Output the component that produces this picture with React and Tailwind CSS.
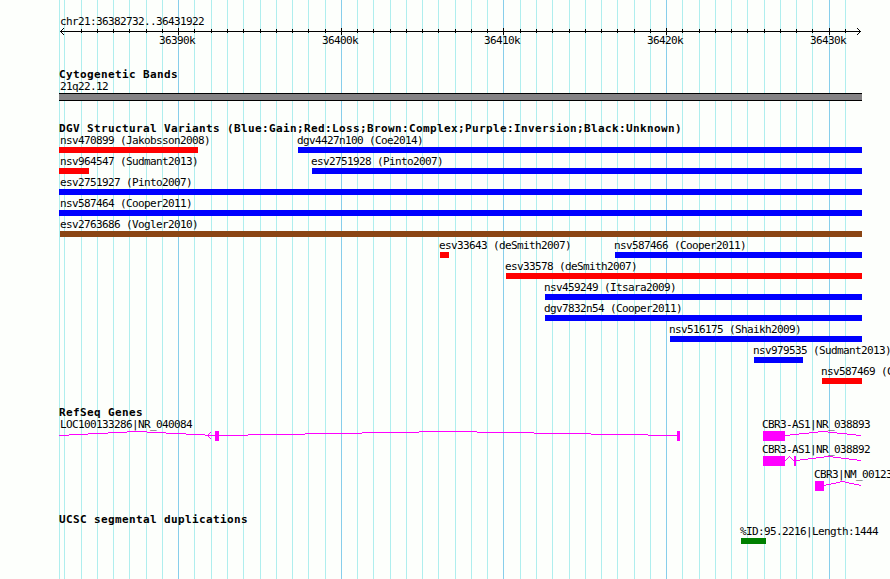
import clsx from "clsx";

// Left and right edge of the drawing area, in px
const LEFT = 59;
const RIGHT = 862;
const WIDTH = 890;
const HEIGHT = 579;

const minorLines = [
  59, 64, 81, 97, 113, 129, 146, 162, 194, 211, 227, 243, 260, 276, 292, 308,
  325, 357, 373, 390, 406, 422, 438, 455, 471, 487, 520, 536, 552, 569, 585,
  601, 617, 634, 650, 682, 699, 715, 731, 747, 764, 780, 796, 812, 845,
];

const majorLines = [
  { x: 178, label: "36390k" },
  { x: 341, label: "36400k" },
  { x: 503, label: "36410k" },
  { x: 666, label: "36420k" },
  { x: 829, label: "36430k" },
];

const barColors = {
  gain: "bg-[#0000ff]",
  loss: "bg-[#ff0000]",
  complex: "bg-[#8b4513]",
  duplication: "bg-[#008000]",
};

const variantRows = [
  [
    { start: 59, end: 198, type: "loss", label: "nsv470899 (Jakobsson2008)" },
    { start: 298, end: 862, type: "gain", label: "dgv4427n100 (Coe2014)" },
  ],
  [
    { start: 59, end: 89, type: "loss", label: "nsv964547 (Sudmant2013)" },
    { start: 312, end: 862, type: "gain", label: "esv2751928 (Pinto2007)" },
  ],
  [{ start: 59, end: 862, type: "gain", label: "esv2751927 (Pinto2007)" }],
  [{ start: 59, end: 862, type: "gain", label: "nsv587464 (Cooper2011)" }],
  [{ start: 60, end: 862, type: "complex", label: "esv2763686 (Vogler2010)" }],
  [
    { start: 440, end: 449, type: "loss", label: "esv33643 (deSmith2007)" },
    { start: 615, end: 862, type: "gain", label: "nsv587466 (Cooper2011)" },
  ],
  [{ start: 506, end: 862, type: "loss", label: "esv33578 (deSmith2007)" }],
  [{ start: 545, end: 862, type: "gain", label: "nsv459249 (Itsara2009)" }],
  [{ start: 545, end: 862, type: "gain", label: "dgv7832n54 (Cooper2011)" }],
  [{ start: 670, end: 862, type: "gain", label: "nsv516175 (Shaikh2009)" }],
  [{ start: 754, end: 803, type: "gain", label: "nsv979535 (Sudmant2013)" }],
  [{ start: 822, end: 862, type: "loss", label: "nsv587469 (C" }],
];

// Exons and introns are [from, to] pairs in page px
const geneRows = [
  [
    {
      start: 59,
      end: 680,
      label: "LOC100133286|NR_040084",
      exons: [[215, 219], [677, 680]],
      introns: [[59, 215], [219, 677]],
      arrow: 208,
    },
    {
      start: 763,
      end: 862,
      label: "CBR3-AS1|NR_038893",
      exons: [[763, 785]],
      introns: [[785, 861]],
    },
  ],
  [
    {
      start: 763,
      end: 862,
      label: "CBR3-AS1|NR_038892",
      exons: [[763, 785], [794, 796]],
      introns: [[785, 794], [796, 861]],
    },
  ],
  [
    {
      start: 815,
      end: 862,
      label: "CBR3|NM_00123",
      exons: [[815, 824]],
      introns: [[824, 861]],
    },
  ],
];

const duplicationRows = [
  [{ start: 741, end: 766, type: "duplication", label: "%ID:95.2216|Length:1444" }],
];

// Splits an intron "hat" into one px high runs, rising 4px to the middle
const getIntronRuns = (from, to) => {
  const step = (to - from) / 8;
  return [4, 3, 2, 1, 0, 1, 2, 3, 4].map((y, k) => {
    const x1 = Math.round(Math.max(from, from + (k - 0.5) * step));
    const x2 = Math.round(Math.min(to, from + (k + 0.5) * step));
    return { x: x1, y, width: x2 - x1 };
  });
};

function GridLines() {
  return (
    <svg
      className="absolute inset-0"
      width={WIDTH}
      height={HEIGHT}
      shapeRendering="crispEdges"
    >
      {minorLines.map((x) => (
        <rect key={x} x={x} y="0" width="1" height={HEIGHT} fill="#afeeee" />
      ))}
      {majorLines.map(({ x }) => (
        <rect key={x} x={x} y="0" width="1" height={HEIGHT} fill="#87ceeb" />
      ))}
    </svg>
  );
}

function Label({ children, nudge }) {
  return (
    <div
      className={clsx(
        "h-[13px] whitespace-nowrap text-[11px] leading-[13px] tracking-[-0.622px]",
        nudge
      )}
    >
      {children}
    </div>
  );
}

function Heading({ children }) {
  return (
    <h2 className="ml-[59px] h-3 whitespace-nowrap text-[11px] font-bold leading-[13px] tracking-[0.378px]">
      {children}
    </h2>
  );
}

// Lays features out left to right, each one as wide as its span
function Row({ items, className, render }) {
  return (
    <div className={clsx("flex", className)}>
      {items.map((item, i) => {
        const previousEnd = i === 0 ? 0 : items[i - 1].end;
        return (
          <div
            key={item.label}
            className="shrink-0"
            style={{
              marginLeft: item.start - previousEnd,
              width: item.end - item.start,
            }}
          >
            {render(item)}
          </div>
        );
      })}
    </div>
  );
}

function Bar({ item }) {
  return (
    <>
      <Label nudge={item.start === LEFT ? "ml-px" : item.start > 60 && "-ml-px"}>
        {item.label}
      </Label>
      <div className={clsx("h-1.5", barColors[item.type])} />
    </>
  );
}

function Gene({ item }) {
  const { start, end, exons, introns, arrow } = item;
  return (
    <>
      <Label nudge={start === LEFT ? "ml-px" : "-ml-px"}>{item.label}</Label>
      <svg
        className="block"
        width={end - start}
        height="10"
        viewBox={`${start} 0 ${end - start} 10`}
        shapeRendering="crispEdges"
        fill="#ff00ff"
      >
        {introns.map(([from, to]) =>
          getIntronRuns(from, to).map((run) => (
            <rect key={run.x} {...run} height="1" />
          ))
        )}
        {arrow &&
          [-3, -2, -1, 0, 1, 2, 3].map((dy) => (
            <rect
              key={dy}
              x={arrow + Math.abs(dy) - 1}
              y={4 + dy}
              width="1"
              height="1"
            />
          ))}
        {exons.map(([from, to]) => (
          <rect key={from} x={from} y="0" width={to - from} height="10" />
        ))}
      </svg>
    </>
  );
}

function Ruler() {
  const labels = majorLines.map(({ x, label }) => ({
    start: x - 19,
    end: x + 17,
    label,
  }));

  return (
    <div className="pt-[15px]">
      <div className="ml-[60px]">
        <Label>chr21:36382732..36431922</Label>
      </div>
      <svg
        className="block h-1.5 overflow-visible"
        width={WIDTH}
        height="6"
        shapeRendering="crispEdges"
      >
        <rect x="60" y="3" width="801" height="1" />
        {minorLines
          .filter((x) => x > 64)
          .map((x) => (
            <rect key={x} x={x} y="1" width="1" height="4" />
          ))}
        {majorLines.map(({ x }) => (
          <rect key={x} x={x} y="0" width="1" height="7" />
        ))}
        {[-3, -2, -1, 1, 2, 3].map((dy) => (
          <g key={dy}>
            <rect x={60 + Math.abs(dy)} y={3 + dy} width="1" height="1" />
            <rect x={860 - Math.abs(dy)} y={3 + dy} width="1" height="1" />
          </g>
        ))}
      </svg>
      <Row items={labels} render={(item) => <Label>{item.label}</Label>} />
    </div>
  );
}

export default function App() {
  return (
    <div className="relative h-[579px] w-[890px] overflow-hidden bg-[#fdfffc] font-['DejaVu_Sans_Mono',monospace] text-black">
      <GridLines />
      <main className="relative">
        <Ruler />

        <section className="pt-[21px]">
          <Heading>Cytogenetic Bands</Heading>
          <Row
            items={[{ start: LEFT, end: RIGHT, label: "21q22.12" }]}
            render={(item) => (
              <>
                <Label nudge="ml-px">{item.label}</Label>
                <div className="h-2 border-y border-black bg-[#848284]" />
              </>
            )}
          />
        </section>

        <section className="pt-[21px]">
          <Heading>
            DGV Structural Variants
            (Blue:Gain;Red:Loss;Brown:Complex;Purple:Inversion;Black:Unknown)
          </Heading>
          {variantRows.map((items, i) => (
            <Row
              key={i}
              items={items}
              className="h-[21px]"
              render={(item) => <Bar item={item} />}
            />
          ))}
        </section>

        <section className="pt-5">
          <Heading>RefSeq Genes</Heading>
          {geneRows.map((items, i) => (
            <Row
              key={i}
              items={items}
              className="h-[25px]"
              render={(item) => <Gene item={item} />}
            />
          ))}
        </section>

        <section className="pt-5">
          <Heading>UCSC segmental duplications</Heading>
          {duplicationRows.map((items, i) => (
            <Row key={i} items={items} render={(item) => <Bar item={item} />} />
          ))}
        </section>
      </main>
    </div>
  );
}
